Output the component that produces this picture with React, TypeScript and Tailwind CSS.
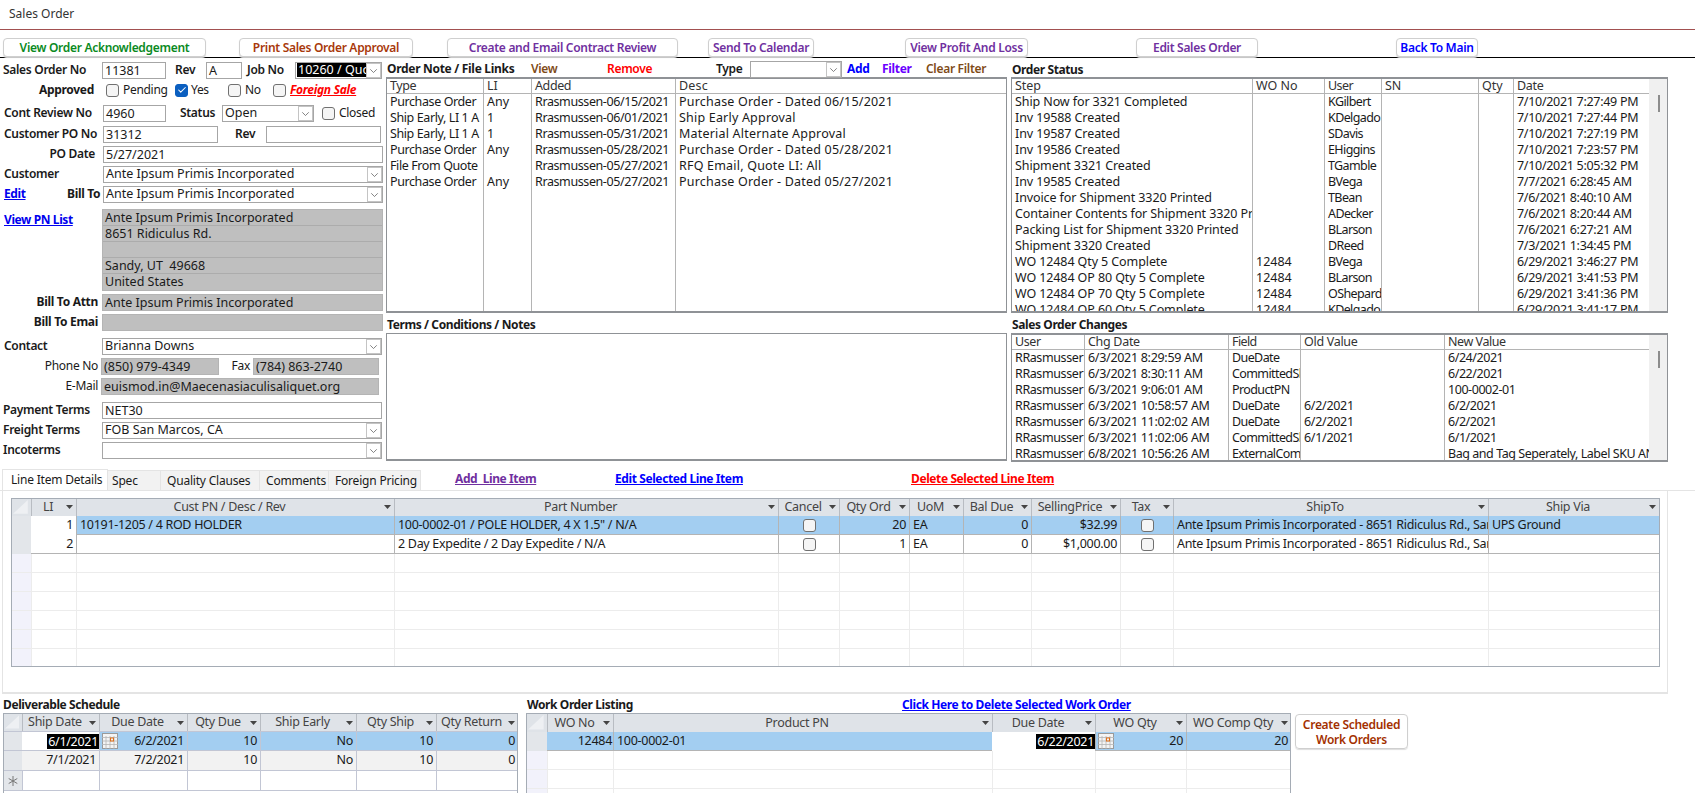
import type { ReactNode } from 'react';
import { Check } from 'lucide-react';

const Chevron = () => (
  <svg viewBox="0 0 16 16" className="w-[15px] h-[15px] shrink-0 bg-white border border-[#c4c4c4]">
    <path d="M4 6.5 L8 10.5 L12 6.5" fill="none" stroke="#666" strokeWidth="1" />
  </svg>
);

const Input = ({ value = '', className = '', grey = false }: { value?: string; className?: string; grey?: boolean }) => (
  <div
    className={`h-[17px] px-[2px] text-[12.5px] tracking-normal leading-[16px] border whitespace-nowrap overflow-hidden shrink-0 ${
      grey ? 'bg-[#bfbfbf] border-[#b4b4b4]' : 'bg-white border-[#a6a6a6]'
    } ${className}`}
  >
    {value}
  </div>
);

const Select = ({ value = '', className = '', selected = false }: { value?: string; className?: string; selected?: boolean }) => (
  <div className={`h-[17px] flex items-center justify-between bg-white border border-[#a6a6a6] pl-[1px] text-[12.5px] tracking-normal shrink-0 ${className}`}>
    <span className={`px-[1px] leading-[14px] whitespace-nowrap overflow-hidden ${selected ? 'bg-black text-white flex-1' : ''}`}>{value}</span>
    <Chevron />
  </div>
);

const Box = ({ checked = false, className = '' }: { checked?: boolean; className?: string }) => (
  <span
    className={`w-[13px] h-[13px] rounded-[3px] border flex items-center justify-center shrink-0 ${
      checked ? 'bg-[#0b5fc0] border-[#0b5fc0]' : 'bg-[#f5f5f5] border-[#707070]'
    } ${className}`}
  >
    {checked && <Check className="w-[10px] h-[10px] text-white" strokeWidth={2.5} />}
  </span>
);

const Arrow = () => (
  <svg viewBox="0 0 7 4" className="w-[7px] h-[4px] shrink-0">
    <path d="M0 0 H7 L3.5 4 Z" fill="#444" />
  </svg>
);

const Corner = () => (
  <svg viewBox="0 0 18 16" className="w-full h-full">
    <path d="M15 1 V14 H1 Z" fill="#eef0f3" />
  </svg>
);

const CalendarIcon = () => (
  <svg viewBox="0 0 16 16" className="w-[16px] h-[16px] shrink-0">
    <rect x="0.5" y="0.5" width="15" height="15" fill="#f4f4f4" stroke="#9a9a9a" />
    <path d="M0 4.5 H16 M0 8 H16 M0 11.5 H16 M4 3 V16 M8 3 V16 M12 3 V16" stroke="#b5b5b5" strokeWidth="0.8" />
    <rect x="8.5" y="5" width="3" height="3" fill="none" stroke="#e0701a" />
  </svg>
);

const NewRowStar = () => (
  <svg viewBox="0 0 10 10" className="w-[10px] h-[10px]">
    <path d="M5 0 V10 M0.7 2.5 L9.3 7.5 M0.7 7.5 L9.3 2.5" stroke="#777" strokeWidth="1" />
  </svg>
);

const TopButton = ({ label, className }: { label: string; className: string }) => (
  <div className={`h-[19px] rounded-[4px] border border-[#cfcfcf] shadow-[0_1px_1px_#ddd] flex items-center justify-center font-semibold text-[12px] tracking-[-0.3px] bg-white whitespace-nowrap shrink-0 ${className}`}>
    {label}
  </div>
);

const Linked = ({ label, className }: { label: string; className: string }) => (
  <span className={`font-bold underline text-[12px] tracking-[-0.4px] whitespace-nowrap ${className}`}>{label}</span>
);

type Col = { title: string; w: string; cells: string[]; track?: string };

const noteCols: Col[] = [
  { title: 'Type', w: 'w-[96px]', track: 'tracking-[-0.4px]', cells: ['Purchase Order', 'Ship Early, LI 1 A', 'Ship Early, LI 1 A', 'Purchase Order', 'File From Quote', 'Purchase Order'] },
  { title: 'LI', w: 'w-[48px]', cells: ['Any', '1', '1', 'Any', '', 'Any'] },
  { title: 'Added', w: 'w-[144px]', track: 'tracking-[-0.4px]', cells: ['Rrasmussen-06/15/2021', 'Rrasmussen-06/01/2021', 'Rrasmussen-05/31/2021', 'Rrasmussen-05/28/2021', 'Rrasmussen-05/27/2021', 'Rrasmussen-05/27/2021'] },
  { title: 'Desc', w: 'flex-1', track: 'tracking-[0.2px]', cells: ['Purchase Order - Dated 06/15/2021', 'Ship Early Approval', 'Material Alternate Approval', 'Purchase Order - Dated 05/28/2021', 'RFQ Email, Quote LI: All', 'Purchase Order - Dated 05/27/2021'] },
];

const statusCols: Col[] = [
  {
    title: 'Step',
    w: 'w-[240px]',
    track: 'tracking-[-0.1px]',
    cells: [
      'Ship Now for 3321 Completed', 'Inv 19588 Created', 'Inv 19587 Created', 'Inv 19586 Created', 'Shipment 3321 Created', 'Inv 19585 Created',
      'Invoice for Shipment 3320 Printed', 'Container Contents for Shipment 3320 Prin', 'Packing List for Shipment 3320 Printed', 'Shipment 3320 Created',
      'WO 12484 Qty 5 Complete', 'WO 12484 OP 80 Qty 5 Complete', 'WO 12484 OP 70 Qty 5 Complete', 'WO 12484 OP 60 Qty 5 Complete',
    ],
  },
  { title: 'WO No', w: 'w-[72px]', cells: ['', '', '', '', '', '', '', '', '', '', '12484', '12484', '12484', '12484'] },
  { title: 'User', w: 'w-[57px]', track: 'tracking-[-0.6px]', cells: ['KGilbert', 'KDelgado', 'SDavis', 'EHiggins', 'TGamble', 'BVega', 'TBean', 'ADecker', 'BLarson', 'DReed', 'BVega', 'BLarson', 'OShepard', 'KDelgado'] },
  { title: 'SN', w: 'w-[97px]', cells: [] },
  { title: 'Qty', w: 'w-[35px]', cells: [] },
  {
    title: 'Date',
    w: 'flex-1',
    track: 'tracking-[-0.3px]',
    cells: [
      '7/10/2021 7:27:49 PM', '7/10/2021 7:27:44 PM', '7/10/2021 7:27:19 PM', '7/10/2021 7:23:57 PM', '7/10/2021 5:05:32 PM', '7/7/2021 6:28:45 AM', '7/6/2021 8:40:10 AM',
      '7/6/2021 8:20:44 AM', '7/6/2021 6:27:21 AM', '7/3/2021 1:34:45 PM', '6/29/2021 3:46:27 PM', '6/29/2021 3:41:53 PM', '6/29/2021 3:41:36 PM', '6/29/2021 3:41:17 PM',
    ],
  },
];

const changeCols: Col[] = [
  { title: 'User', w: 'w-[72px]', track: 'tracking-[-0.4px]', cells: Array(7).fill('RRasmusser') },
  { title: 'Chg Date', w: 'w-[144px]', track: 'tracking-[-0.3px]', cells: ['6/3/2021 8:29:59 AM', '6/3/2021 8:30:11 AM', '6/3/2021 9:06:01 AM', '6/3/2021 10:58:57 AM', '6/3/2021 11:02:02 AM', '6/3/2021 11:02:06 AM', '6/8/2021 10:56:26 AM'] },
  { title: 'Field', w: 'w-[72px]', track: 'tracking-[-0.6px]', cells: ['DueDate', 'CommittedSl', 'ProductPN', 'DueDate', 'DueDate', 'CommittedSl', 'ExternalCom'] },
  { title: 'Old Value', w: 'w-[144px]', track: 'tracking-[-0.3px]', cells: ['', '', '', '6/2/2021', '6/2/2021', '6/1/2021', ''] },
  { title: 'New Value', w: 'flex-1', track: 'tracking-[-0.45px]', cells: ['6/24/2021', '6/22/2021', '100-0002-01', '6/2/2021', '6/2/2021', '6/1/2021', 'Bag and Tag Seperately, Label SKU AN'] },
];

const ListBox = ({ cols, className, scroll = false }: { cols: Col[]; className: string; scroll?: boolean }) => (
  <div className={`flex border border-[#8f9296] border-t-2 border-b-2 overflow-hidden bg-white ${className}`}>
    {cols.map((c, i) => (
      <div key={c.title} className={`${c.w} ${c.track ?? ''} shrink-0 min-w-0 overflow-hidden ${i > 0 ? 'border-l border-[#b4b4b4]' : ''}`}>
        <div className="h-[15px] border-b border-[#b4b4b4] px-[3px] leading-[14px] text-[#333]">{c.title}</div>
        {c.cells.map((t, j) => (
          <div key={j} className="h-[16px] px-[3px] leading-[16px] whitespace-nowrap overflow-hidden">
            {t}
          </div>
        ))}
      </div>
    ))}
    {scroll && (
      <div className="w-[18px] shrink-0 bg-[#f0f0f0] flex justify-center pl-[1px]">
        <div className="w-[2px] h-[17px] mt-[16px] bg-[#8c8c8c]" />
      </div>
    )}
  </div>
);

const SectionTitle = ({ label, className = '' }: { label: string; className?: string }) => (
  <div className={`font-bold text-[12px] tracking-[-0.4px] whitespace-nowrap pl-[1px] ${className}`}>{label}</div>
);

const LINE_COLS = 'grid grid-cols-[19px_45px_318px_384px_61px_70px_54px_68px_89px_53px_315px_171px]';
const DELIV_COLS = 'grid grid-cols-[18px_77px_88px_73px_96px_80px_82px]';
const WO_COLS = 'grid grid-cols-[20px_66px_379px_103px_91px_105px]';

const HeadCell = ({ label }: { label: string }) => (
  <div className="flex items-center text-[#444] bg-[#dfe3e8] whitespace-nowrap overflow-hidden border-l border-[#b8bcc2]">
    <span className="flex flex-1 justify-center">{label}</span>
    <span className="mr-[3px] ml-[2px]">
      <Arrow />
    </span>
  </div>
);

const BlankRows = ({ cols, count, columns }: { cols: string; count: number; columns: number }) => (
  <>
    {Array.from({ length: count }).map((_, r) => (
      <div key={r} className={`${cols} h-[19px] border-b border-[#ececec]`}>
        <div className="bg-[#f2f2fb]" />
        {Array.from({ length: columns }).map((_, c) => (
          <div key={c} className="border-l border-[#ececec]" />
        ))}
      </div>
    ))}
  </>
);

const Cell = ({ children = null, className = '' }: { children?: ReactNode; className?: string }) => (
  <div className={`border-l border-[#b4b4b4] px-[3px] flex items-center whitespace-nowrap overflow-hidden ${className}`}>{children}</div>
);

export default function App() {
  return (
    <div className="w-[1695px] h-[793px] overflow-hidden bg-white text-[#1a1a1a] text-[12.5px] font-['Noto_Sans',sans-serif]">
      {/* title */}
      <div className="h-[30px] border-b border-[#a25050] pl-[9px] pt-[6px] leading-[16px] text-[12px] text-[#333]">Sales Order</div>

      {/* button bar */}
      <div className="h-[28px] border-b border-black flex pl-[3px] pt-[8px]">
        <TopButton label="View Order Acknowledgement" className="w-[203px] text-[#0a8a1e]" />
        <TopButton label="Print Sales Order Approval" className="w-[174px] ml-[33px] text-[#a8380a]" />
        <TopButton label="Create and Email Contract Review" className="w-[231px] ml-[34px] text-[#7030a0]" />
        <TopButton label="Send To Calendar" className="w-[106px] ml-[30px] text-[#7030a0]" />
        <TopButton label="View Profit And Loss" className="w-[123px] ml-[91px] text-[#7030a0]" />
        <TopButton label="Edit Sales Order" className="w-[122px] ml-[108px] text-[#7030a0]" />
        <TopButton label="Back To Main" className="w-[82px] ml-[138px] text-[#0000ff]" />
      </div>

      {/* upper section */}
      <div className="flex h-[405px]">
        {/* order form */}
        <div className="w-[386px] shrink-0 pt-[3px] text-[12px] tracking-[-0.3px] whitespace-nowrap">
          <div className="flex items-center h-[18px] font-semibold">
            <span className="w-[102px] pl-[3px] shrink-0">Sales Order No</span>
            <Input value="11381" className="w-[64px] font-normal" />
            <span className="w-[40px] pl-[9px] shrink-0">Rev</span>
            <Input value="A" className="w-[36px] font-normal" />
            <span className="w-[53px] pl-[5px] shrink-0">Job No</span>
            <Select value="10260 / Quo" selected className="w-[87px] font-normal" />
          </div>
          <div className="flex items-center h-[22px] mb-[2px]">
            <span className="w-[94px] text-right font-bold shrink-0">Approved</span>
            <Box className="ml-[12px]" />
            <span className="ml-[4px] w-[52px]">Pending</span>
            <Box checked />
            <span className="ml-[3px] w-[37px]">Yes</span>
            <Box />
            <span className="ml-[4px] w-[28px]">No</span>
            <Box />
            <span className="ml-[4px] text-[#ff0000] font-bold italic underline">Foreign Sale</span>
          </div>
          <div className="flex items-center h-[20px] font-semibold">
            <span className="w-[103px] pl-[4px] shrink-0">Cont Review No</span>
            <Input value="4960" className="w-[63px] font-normal" />
            <span className="w-[56px] pl-[14px] shrink-0">Status</span>
            <Select value="Open" className="w-[92px] font-normal" />
            <Box className="ml-[8px]" />
            <span className="ml-[4px] font-normal">Closed</span>
          </div>
          <div className="flex items-center h-[20px] mt-[1px] font-semibold">
            <span className="w-[103px] pl-[4px] shrink-0">Customer PO No</span>
            <Input value="31312" className="w-[115px] font-normal" />
            <span className="w-[48px] pl-[17px] shrink-0">Rev</span>
            <Input className="w-[115px]" />
          </div>
          <div className="flex items-center h-[20px] font-semibold">
            <span className="w-[95px] text-right shrink-0">PO Date</span>
            <Input value="5/27/2021" className="w-[280px] ml-[8px] font-normal" />
          </div>
          <div className="flex items-center h-[20px] font-semibold">
            <span className="w-[103px] pl-[4px] shrink-0">Customer</span>
            <Select value="Ante Ipsum Primis Incorporated" className="w-[280px] font-normal" />
          </div>
          <div className="flex items-center h-[20px] font-semibold">
            <span className="w-[63px] ml-[4px] shrink-0">
              <Linked label="Edit" className="text-[#0000ee]" />
            </span>
            <span className="w-[36px] font-bold shrink-0">Bill To</span>
            <Select value="Ante Ipsum Primis Incorporated" className="w-[280px] font-normal" />
          </div>
          <div className="flex mt-[5px]">
            <div className="w-[102px] pl-[4px] shrink-0 pt-[2px]">
              <Linked label="View PN List" className="text-[#0000ee]" />
            </div>
            <div className="w-[281px] bg-[#bfbfbf] border border-[#b4b4b4] text-[12.5px] tracking-normal">
              {['Ante Ipsum Primis Incorporated', '8651 Ridiculus Rd.', '', 'Sandy, UT\u00a0 49668', 'United States'].map((t, i) => (
                <div key={i} className={`h-[16px] px-[2px] leading-[15px] ${i < 4 ? 'border-b border-[#acacac]' : ''}`}>
                  {t}
                </div>
              ))}
            </div>
          </div>
          <div className="flex items-center h-[20px] mt-[1px]">
            <span className="w-[98px] text-right font-bold shrink-0">Bill To Attn</span>
            <Input grey value="Ante Ipsum Primis Incorporated" className="w-[281px] ml-[4px]" />
          </div>
          <div className="flex items-center h-[20px]">
            <span className="w-[98px] text-right font-bold shrink-0">Bill To Emai</span>
            <Input grey className="w-[281px] ml-[4px]" />
          </div>
          <div className="flex items-center h-[20px] mt-[4px] font-semibold">
            <span className="w-[102px] pl-[4px] shrink-0">Contact</span>
            <Select value="Brianna Downs" className="w-[280px] font-normal" />
          </div>
          <div className="flex items-center h-[20px]">
            <span className="w-[98px] text-right shrink-0">Phone No</span>
            <Input grey value="(850) 979-4349" className="w-[118px] ml-[3px]" />
            <span className="w-[31px] text-right shrink-0">Fax</span>
            <Input grey value="(784) 863-2740" className="w-[126px] ml-[3px]" />
          </div>
          <div className="flex items-center h-[20px]">
            <span className="w-[98px] text-right shrink-0">E-Mail</span>
            <Input grey value="euismod.in@Maecenasiaculisaliquet.org" className="w-[278px] ml-[3px]" />
          </div>
          <div className="flex items-center h-[20px] mt-[4px] font-semibold">
            <span className="w-[102px] pl-[3px] shrink-0">Payment Terms</span>
            <Input value="NET30" className="w-[280px] font-normal" />
          </div>
          <div className="flex items-center h-[20px] font-semibold">
            <span className="w-[102px] pl-[3px] shrink-0">Freight Terms</span>
            <Select value="FOB San Marcos, CA" className="w-[280px] font-normal" />
          </div>
          <div className="flex items-center h-[20px] font-semibold">
            <span className="w-[102px] pl-[3px] shrink-0">Incoterms</span>
            <Select className="w-[280px] font-normal" />
          </div>
        </div>

        {/* notes and terms */}
        <div className="w-[624px] shrink-0 pt-[3px] pr-[3px]">
          <div className="flex items-center h-[16px] whitespace-nowrap font-semibold text-[12px] tracking-[-0.3px] pl-[1px]">
            <span className="w-[144px] font-bold shrink-0">Order Note / File Links</span>
            <span className="w-[76px] text-[#7f4b17] shrink-0">View</span>
            <span className="w-[109px] text-[#ff0000] shrink-0">Remove</span>
            <span className="w-[34px] shrink-0">Type</span>
            <Select className="w-[92px] font-normal" />
            <span className="w-[40px] pl-[5px] text-[#0000ff] font-bold shrink-0">Add</span>
            <span className="w-[44px] text-[#6a00ff] font-bold shrink-0">Filter</span>
            <span className="text-[#7f4b17]">Clear Filter</span>
          </div>
          <ListBox cols={noteCols} className="h-[236px]" />
          <SectionTitle label="Terms / Conditions / Notes" className="h-[20px] leading-[24px]" />
          <div className="h-[128px] border border-[#8f9296] border-b-2 bg-white" />
        </div>

        {/* status and changes */}
        <div className="w-[657px] shrink-0 ml-[1px] pt-[3px]">
          <SectionTitle label="Order Status" className="h-[16px] leading-[18px]" />
          <ListBox cols={statusCols} className="h-[236px]" scroll />
          <SectionTitle label="Sales Order Changes" className="h-[20px] leading-[24px]" />
          <ListBox cols={changeCols} className="h-[129px]" scroll />
        </div>
      </div>

      {/* tabs */}
      <div className="flex items-end h-[28px] pl-[2px] border-b border-[#e4e4e4] whitespace-nowrap text-[12px] tracking-[-0.2px]">
        <div className="w-[106px] h-[21px] bg-white border border-[#e4e4e4] border-b-0 pl-[8px] leading-[20px] shrink-0">Line Item Details</div>
        <div className="w-[53px] h-[20px] bg-[#f2f2f2] border-r border-t border-[#e4e4e4] pl-[4px] leading-[20px] shrink-0">Spec</div>
        <div className="w-[99px] h-[20px] bg-[#f2f2f2] border-r border-t border-[#e4e4e4] pl-[6px] leading-[20px] shrink-0">Quality Clauses</div>
        <div className="w-[69px] h-[20px] bg-[#f2f2f2] border-r border-t border-[#e4e4e4] pl-[6px] leading-[20px] shrink-0">Comments</div>
        <div className="w-[92px] h-[20px] bg-[#f2f2f2] border-r border-t border-[#e4e4e4] pl-[6px] leading-[20px] shrink-0">Foreign Pricing</div>
        <div className="flex h-[22px] items-center self-end">
          <span className="w-[160px] ml-[34px] shrink-0">
            <Linked label={'Add\u00a0 Line Item'} className="text-[#7030a0]" />
          </span>
          <span className="w-[296px] shrink-0">
            <Linked label="Edit Selected Line Item" className="text-[#0000ff]" />
          </span>
          <Linked label="Delete Selected Line Item" className="text-[#ff0000]" />
        </div>
      </div>

      {/* line items */}
      <div className="mx-[2px] w-[1666px] h-[203px] border border-t-0 border-[#e4e4e4] border-b-2 pl-[8px] pt-[7px] tracking-[-0.3px]">
        <div className="w-[1649px] h-[169px] border border-[#a5acb5] overflow-hidden bg-white">
          <div className={`${LINE_COLS} h-[17px] border-b border-[#b8bcc2]`}>
            <div className="bg-[#dfe3e8]">
              <Corner />
            </div>
            <HeadCell label="LI" />
            <HeadCell label="Cust PN / Desc / Rev" />
            <HeadCell label="Part Number" />
            <HeadCell label="Cancel" />
            <HeadCell label="Qty Ord" />
            <HeadCell label="UoM" />
            <HeadCell label="Bal Due" />
            <HeadCell label="SellingPrice" />
            <HeadCell label="Tax" />
            <HeadCell label="ShipTo" />
            <HeadCell label="Ship Via" />
          </div>
          <div className={`${LINE_COLS} h-[19px] border-b border-[#b4b4b4] bg-[#a3cef1]`}>
            <div className="bg-[#e3e6ea]" />
            <div className="bg-white px-[3px] flex items-center justify-end">1</div>
            <Cell>10191-1205 / 4 ROD HOLDER</Cell>
            <Cell>100-0002-01 / POLE HOLDER, 4 X 1.5" / N/A</Cell>
            <Cell className="justify-center"><Box /></Cell>
            <Cell className="justify-end">20</Cell>
            <Cell>EA</Cell>
            <Cell className="justify-end">0</Cell>
            <Cell className="justify-end">$32.99</Cell>
            <Cell className="justify-center"><Box /></Cell>
            <Cell>Ante Ipsum Primis Incorporated - 8651 Ridiculus Rd., Sar</Cell>
            <Cell>UPS Ground</Cell>
          </div>
          <div className={`${LINE_COLS} h-[19px] border-b border-[#b4b4b4]`}>
            <div className="bg-[#e3e6ea]" />
            <div className="px-[3px] flex items-center justify-end">2</div>
            <Cell />
            <Cell>2 Day Expedite / 2 Day Expedite / N/A</Cell>
            <Cell className="justify-center"><Box /></Cell>
            <Cell className="justify-end">1</Cell>
            <Cell>EA</Cell>
            <Cell className="justify-end">0</Cell>
            <Cell className="justify-end">$1,000.00</Cell>
            <Cell className="justify-center"><Box /></Cell>
            <Cell>Ante Ipsum Primis Incorporated - 8651 Ridiculus Rd., Sar</Cell>
            <Cell />
          </div>
          <BlankRows cols={LINE_COLS} count={6} columns={11} />
        </div>
      </div>

      {/* lower section */}
      <div className="flex pl-[3px] pt-[3px] tracking-[-0.3px]">
        <div className="w-[516px] shrink-0">
          <SectionTitle label="Deliverable Schedule" className="h-[16px] leading-[16px] !pl-0" />
          <div className="w-[515px] h-[90px] border-x border-t border-[#a5acb5] overflow-hidden">
            <div className={`${DELIV_COLS} h-[18px] border-b border-[#c2c6d4]`}>
              <div className="bg-[#dfe3e8]">
                <Corner />
              </div>
              <HeadCell label="Ship Date" />
              <HeadCell label="Due Date" />
              <HeadCell label="Qty Due" />
              <HeadCell label="Ship Early" />
              <HeadCell label="Qty Ship" />
              <HeadCell label="Qty Return" />
            </div>
            <div className={`${DELIV_COLS} h-[19px] border-b border-[#c2c6d4] bg-[#a3cef1]`}>
              <div className="bg-[#e3e6ea]" />
              <div className="bg-white flex items-center justify-end">
                <span className="bg-black text-white px-[1px] leading-[15px]">6/1/2021</span>
              </div>
              <Cell className="border-[#c2c6d4] !pl-[2px]">
                <CalendarIcon />
                <span className="ml-auto">6/2/2021</span>
              </Cell>
              <Cell className="justify-end border-[#c2c6d4]">10</Cell>
              <Cell className="justify-end border-[#c2c6d4]">No</Cell>
              <Cell className="justify-end border-[#c2c6d4]">10</Cell>
              <Cell className="justify-end border-[#c2c6d4]">0</Cell>
            </div>
            <div className={`${DELIV_COLS} h-[20px] border-b border-[#c2c6d4] bg-[#f2f2f2]`}>
              <div className="bg-[#e3e6ea]" />
              <div className="flex items-center justify-end px-[3px]">7/1/2021</div>
              <Cell className="justify-end border-[#c2c6d4]">7/2/2021</Cell>
              <Cell className="justify-end border-[#c2c6d4]">10</Cell>
              <Cell className="justify-end border-[#c2c6d4]">No</Cell>
              <Cell className="justify-end border-[#c2c6d4]">10</Cell>
              <Cell className="justify-end border-[#c2c6d4]">0</Cell>
            </div>
            <div className={`${DELIV_COLS} h-[20px] border-b border-[#c2c6d4]`}>
              <div className="bg-[#e3e6ea] flex items-center justify-center">
                <NewRowStar />
              </div>
              {Array.from({ length: 6 }).map((_, i) => (
                <div key={i} className="border-l border-[#c2c6d4]" />
              ))}
            </div>
          </div>
        </div>

        <div className="w-[764px] ml-[7px] shrink-0">
          <div className="flex h-[16px] leading-[16px]">
            <SectionTitle label="Work Order Listing" className="w-[376px]" />
            <Linked label="Click Here to Delete Selected Work Order" className="text-[#0000ff]" />
          </div>
          <div className="w-[765px] h-[90px] border-x border-t border-[#a5acb5] overflow-hidden">
            <div className={`${WO_COLS} h-[18px] border-b border-[#b4b4b4]`}>
              <div className="bg-[#dfe3e8]">
                <Corner />
              </div>
              <HeadCell label="WO No" />
              <HeadCell label="Product PN" />
              <HeadCell label="Due Date" />
              <HeadCell label="WO Qty" />
              <HeadCell label="WO Comp Qty" />
            </div>
            <div className={`${WO_COLS} h-[19px] border-b border-[#b4b4b4] bg-[#a3cef1]`}>
              <div className="bg-[#e3e6ea]" />
              <div className="flex items-center justify-end px-[1px]">12484</div>
              <Cell>100-0002-01</Cell>
              <div className="bg-white flex items-center justify-end">
                <span className="bg-black text-white px-[1px] leading-[15px]">6/22/2021</span>
              </div>
              <Cell className="!pl-[2px]">
                <CalendarIcon />
                <span className="ml-auto">20</span>
              </Cell>
              <Cell className="justify-end">20</Cell>
            </div>
            <BlankRows cols={WO_COLS} count={3} columns={5} />
          </div>
        </div>

        <div className="w-[113px] h-[35px] mt-[17px] ml-[5px] rounded-[4px] border border-[#cfcfcf] shadow-[0_1px_1px_#ddd] text-[#a33000] font-semibold text-[12px] text-center leading-[15px] pt-[2px] shrink-0">
          Create Scheduled
          <br />
          Work Orders
        </div>
      </div>
    </div>
  );
}
